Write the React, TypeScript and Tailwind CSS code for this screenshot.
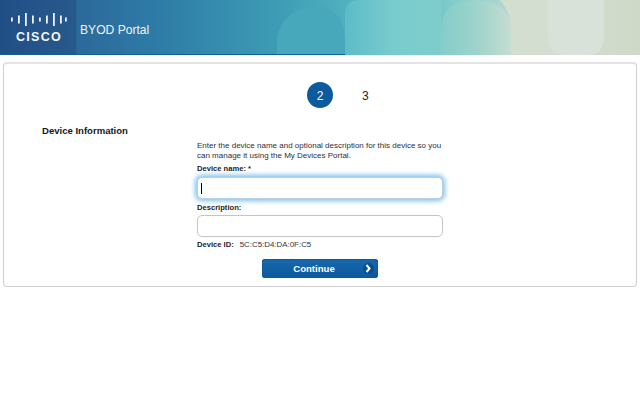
import React from "react";

function Logo() {
  const bars = [[0, 4], [7, 8], [14, 13], [21, 8], [28, 4], [35, 8], [42, 13], [49, 8], [54, 4]];
  return (
    <div className="flex flex-col items-center w-[56px]">
      <svg width="56" height="13" viewBox="0 0 56 13" className="block">
        {bars.map(([x, h]) => (
          <rect key={x} x={x} y={(13 - h) / 2} width="1.8" height={h} fill="#eef3f8" />
        ))}
      </svg>
      <span className="mt-[5px] text-[12.5px] leading-[12px] font-bold text-[#f4f7fa] tracking-[1.3px] [font-family:'Liberation_Sans',sans-serif]">
        CISCO
      </span>
    </div>
  );
}

function HeaderArt() {
  return (
    <svg className="absolute inset-0" width="640" height="55" viewBox="0 0 640 55">
      <defs>
        <linearGradient id="bg" x1="0" x2="1" y1="0" y2="0">
          <stop offset="0" stopColor="#204f86" />
          <stop offset="0.118" stopColor="#28598c" />
          <stop offset="0.12" stopColor="#2b699b" />
          <stop offset="0.25" stopColor="#2e7ca7" />
          <stop offset="0.45" stopColor="#3f9fb6" />
          <stop offset="0.6" stopColor="#5dbcc5" />
          <stop offset="0.7" stopColor="#7ccaca" />
          <stop offset="0.79" stopColor="#b2d7cf" />
          <stop offset="0.86" stopColor="#d3ded0" />
          <stop offset="1" stopColor="#ced9c8" />
        </linearGradient>
        <linearGradient id="a" x1="0" x2="1" y1="0" y2="0">
          <stop offset="0" stopColor="#5cbcc7" />
          <stop offset="0.5" stopColor="#78cbcd" />
          <stop offset="1" stopColor="#7ecdcb" />
        </linearGradient>
        <linearGradient id="b" x1="0" x2="1" y1="0" y2="0">
          <stop offset="0" stopColor="#84cdc9" />
          <stop offset="0.5" stopColor="#9dd3cb" />
          <stop offset="1" stopColor="#c5ddd2" />
        </linearGradient>
      </defs>
      <rect width="640" height="55" fill="url(#bg)" />
      <path d="M277 55V38Q284 6 320 6Q343 10 345 38V55Z" fill="#46a8ba" />
      <path d="M345 55V14Q346 0 358 0H441V55Z" fill="url(#a)" />
      <path d="M441 55V28Q443 0 475 0Q508 0 511 28V55Z" fill="url(#b)" />
      <path d="M508 0H548V55H511V28Q510 12 500 0Z" fill="#d3ded0" />
      <path d="M548 0H604V36Q604 55 588 55H564Q548 55 548 36Z" fill="#d8e2d9" />
      <rect y="54" width="345" height="1" fill="#0d6199" />
    </svg>
  );
}

const inputBase = "block w-[246px] bg-white rounded-[5px] border";

export default function App() {
  return (
    <div className="w-[640px] h-[400px] bg-white overflow-hidden flex flex-col text-[8px] leading-[10px] text-[#2b2b33] [font-family:'Liberation_Sans',Arial,sans-serif]">
      <header className="relative h-[56px] shrink-0">
        <HeaderArt />
        <div className="relative flex items-center h-[55px] pl-[11px]">
          <Logo />
          <span className="ml-[13px] mt-[5px] text-[12.1px] text-[#eef5f8]">BYOD Portal</span>
        </div>
      </header>

      <main className="mt-[6px] mx-[3px] h-[225px] border border-[#cfcfcf] border-t-[#e4e4e4] border-t-2 rounded-[4px] flex flex-col">
        <div className="flex justify-center pt-[18px]">
          <div className="relative">
            <div className="w-[26px] h-[26px] pt-[1px] rounded-full bg-[#0b5a9e] text-white text-[12px] leading-[14px] flex items-center justify-center">
              2
            </div>
            <span className="absolute left-[55px] top-[7px] text-[12px] leading-[14px] text-[#222]">3</span>
          </div>
        </div>

        <div className="flex mt-[17px]">
          <h2 className="ml-[38px] w-[155px] text-[9.55px] font-bold leading-[12px] text-[#15151a]">
            Device Information
          </h2>
          <div className="w-[246px] mt-[16px]">
            <p className="text-[#2e2e38]">
              Enter the device name and optional description for this device so you can manage it using the My Devices Portal.
            </p>
            <label className="block mt-[3px] font-bold text-[#23232b] text-[7.6px]">Device name: *</label>
            <div className={`${inputBase} mt-[3px] h-[22px] border-[#b9cfe2] shadow-[0_0_5px_2px_#7cc0f2] flex items-center pl-[3px]`}>
              <span className="w-px h-[11px] bg-black" />
            </div>
            <label className="block mt-[4px] font-bold text-[#23232b] text-[7.6px]">Description:</label>
            <div className={`${inputBase} mt-[2px] h-[22px] border-[#c4c4c4]`} />
            <div className="flex mt-[3px] text-[7.6px]">
              <span className="font-bold text-[#23232b]">Device ID:</span>
              <span className="ml-[6px] text-[7.9px] text-[#33333c]">5C:C5:D4:DA:0F:C5</span>
            </div>
            <div className="flex justify-center mt-[9px]">
              <button className="relative w-[116px] h-[19px] rounded-[2px] bg-gradient-to-b from-[#1667ad] to-[#0c5a9e] border border-[#0f5a98] text-white font-bold text-[9.6px] flex items-center justify-center pr-[12px]">
                Continue
                <span className="absolute right-[3px] top-[3px] w-[11px] h-[11px] rounded-full bg-[#0a4f8c] flex items-center justify-center">
                  <svg width="7" height="9" viewBox="0 0 7 9">
                    <path d="M1.5 1l3 3.5-3 3.5" fill="none" stroke="#fff" strokeWidth="2" />
                  </svg>
                </span>
              </button>
            </div>
          </div>
        </div>
      </main>
    </div>
  );
}
